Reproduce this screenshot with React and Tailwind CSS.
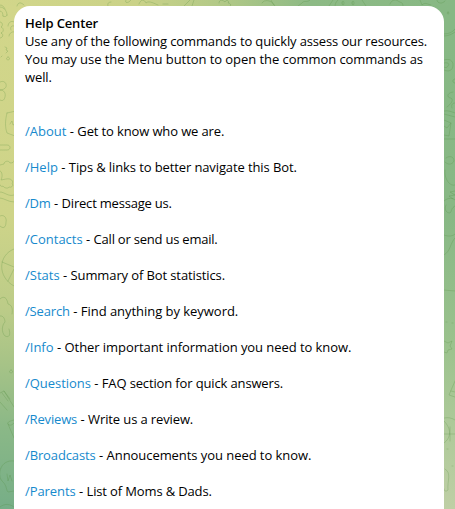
const INTRO = [
  { text: "Use any of the following commands to quickly assess our resources.", track: "tracking-[-0.135px]" },
  { text: "You may use the Menu button to open the common commands as", track: "tracking-[-0.06px]" },
  { text: "well.", track: "tracking-[-0.1px]" },
];

const COMMANDS = [
  ["/About", "Get to know who we are.", "tracking-normal", "tracking-[-0.13px]"],
  ["/Help", "Tips & links to better navigate this Bot.", "tracking-normal", "tracking-[-0.11px]"],
  ["/Dm", "Direct message us.", "tracking-[-0.2px]", "tracking-[-0.2px]"],
  ["/Contacts", "Call or send us email.", "tracking-normal", "tracking-[-0.22px]"],
  ["/Stats", "Summary of Bot statistics.", "tracking-normal", "tracking-[-0.11px]"],
  ["/Search", "Find anything by keyword.", "tracking-[-0.15px]", "tracking-[-0.04px]"],
  ["/Info", "Other important information you need to know.", "tracking-normal", "tracking-[-0.06px]"],
  ["/Questions", "FAQ section for quick answers.", "tracking-[-0.04px]", "tracking-[-0.14px]"],
  ["/Reviews", "Write us a review.", "tracking-[-0.16px]", "tracking-[-0.12px]"],
  ["/Broadcasts", "Annoucements you need to know.", "tracking-[-0.12px]", "tracking-[-0.06px]"],
  ["/Parents", "List of Moms & Dads.", "tracking-[-0.08px]", "tracking-[-0.14px]"],
];

function Wallpaper() {
  return (
    <svg className="absolute inset-0" width="455" height="509" viewBox="0 0 455 509">
      <defs>
        <linearGradient id="top" x1="0" y1="0" x2="1" y2="0">
          <stop offset="0" stopColor="#d2d68a" />
          <stop offset="0.3" stopColor="#cad288" />
          <stop offset="0.5" stopColor="#b0c887" />
          <stop offset="0.68" stopColor="#8dba85" />
          <stop offset="1" stopColor="#87b884" />
        </linearGradient>
        <linearGradient id="left" x1="0" y1="0" x2="0" y2="1">
          <stop offset="0" stopColor="#d2d68a" />
          <stop offset="0.42" stopColor="#ced489" />
          <stop offset="0.6" stopColor="#bccc88" />
          <stop offset="0.7" stopColor="#a9c487" />
          <stop offset="0.84" stopColor="#8ab887" />
          <stop offset="1" stopColor="#76ae87" />
        </linearGradient>
        <linearGradient id="right" x1="0" y1="0" x2="0" y2="1">
          <stop offset="0" stopColor="#87b884" />
          <stop offset="0.42" stopColor="#88b885" />
          <stop offset="0.67" stopColor="#9bc28d" />
          <stop offset="0.85" stopColor="#afca9a" />
          <stop offset="1" stopColor="#bfcfa5" />
        </linearGradient>
      </defs>
      <rect width="455" height="30" fill="url(#top)" />
      <rect y="6" width="30" height="503" fill="url(#left)" />
      <rect x="425" y="6" width="30" height="503" fill="url(#right)" />
      <g fill="none" stroke="#4e8a3c" strokeOpacity="0.24" strokeWidth="1" strokeLinecap="round" strokeLinejoin="round">
        <path d="M0 7c4 0 7 4 7 8M0 11c2 0 3 2 3 5M7 15c0 2-3 2-4 1M0 22c3 0 3 4 1 5c3 1 3 5 0 6c3 1 2 5-1 5M14 22c-3-2-6 1-6 4M14 26c-3-1-4 2-3 4M9 36c0-3 4-5 5-4M5 47l2 1-1 2 2 1-2 2M1 57l1-1M8 57a1.5 1.5 0 1 0 .1 0" />
        <path d="M0 82c4-2 7 1 6 5c-1 2-4 3-6 3c4 0 6 3 5 7c-1 4-3 4-5 3M7 113l9-2M7 113c-2 8-2 14 0 20l8 3M10 124l2-3 1 4 3-1M0 145h7c4 0 4 5 0 5h-7M0 165l4-1c0-3 5-4 6-1c3 0 4-1 4-2" />
        <path d="M0 171c2 0 3 5 1 9l5-1c5-1 8 2 6 5c2 1 0 4-3 3c-1 2-5 1-6-1c-1 1-3 0-3-1M0 192c5 0 8 5 14 3M0 198c4 0 8 4 14 4M0 216c4-2 7 2 6 6c0 6-3 7-6 4M14 249c-16 6-17 28 0 37M2 262l12 5M8 281l6-12" />
        <path d="M0 299c4-4 7-1 8 5c4 1 5 5 4 10M0 316c3-1 5 3 5 6c-3 3-4 10 0 14c4 2 6-1 4-7M11 370a1.5 1.5 0 1 0 .1 0M0 393l4-2 10 16M0 402l7 8M2 393l6 8M4 391l6 8M14 420c-4 1-7 2-6 4l6 14M8 424c2 3 5 0 6-1M14 461c-14-2-18 15-11 21c4 4 3 8 5 10l6-1M7 474l1 7 2-6 2 6M0 507c5-4 10-3 14 0" />
        <path d="M0 5c3 0 4 2 5 4M17 6c1-4 4-4 7-1M108 6c-1-3 1-4 3-4M126 0c-2 4 3 3 5 0M139 4c2-5 5-5 7-1c3-3 9 1 12 2M163 4h5M184 6l6-6M194 0l-2 6M219 3c0-4 4-3 6-1c1-3 5-1 3 1c2 0 4 2 2 3M262 3c2-4 10-3 12 2M271 0c1 3 3 4 4 6M298 6l4-3c2-3 5 0 8-3M329 6l4-6M335 6c0-3 2-5 3-6M342 3a1 2 0 1 1 2 0a1 2 0 1 1-2 0M352 3a1 2 0 1 1 2 0a1 2 0 1 1-2 0M362 0l4 6M390 4c1-4 6-5 8-3c3 2 5 1 5 5M420 0l2 5c3-3 5-1 9 0M437 0c0 4 6 4 8 1" />
        <path d="M455 29c-2 3-6 5-11 5M455 32c-3 2-6 4-11 4M448 12a1 1 0 1 0 .1 0M444 60c6-2 9 1 9 5c0 6-5 7-9 5M444 63c4-1 6 1 4 3c-1 2-3 2-4 1M455 79c-3 0-3 4 0 4M453 92c-7 1-6 6-2 6c3 2 0 6-4 9M455 103c-3 0-4 2-3 5M444 111c4-1 8 1 11 2M444 114l11 3M444 120l7 3-4 5-3-2M451 123l-2 13-5-1M444 139l11 0M446 158c4-3 8-1 8 3c-2 4-6 4-9 1" />
        <path d="M445 170c-1 9 5 17 10 15M455 191l-5 1 5 3-6 1 4 3M444 201c4-4 10-3 11-1M446 205c-2 4 0 8 4 8c2-2 1-5 5-7M444 235c5 2 9 1 11-1M455 238c-5 5-4 13-11 17M444 290c4 0 7 1 11 1M446 322h1M452 323h1M444 341l4 2 4-2-2 5 2 3-4 1-1 3-3-1M455 381l-6 14 6 2M451 391l4 1M444 418c4-1 8 0 11 2M444 421c8 8 7 17 0 22M444 434h11M450 427v14M447 449h1M452 466h1M445 469c7 4 2 12 3 21c-2 2-4 1-4-1" />
      </g>
    </svg>
  );
}

export default function App() {
  return (
    <div className="relative h-[509px] w-[455px] overflow-hidden bg-[#a9c487] pl-3.5 pt-1.5 font-['Open_Sans','Noto_Sans',sans-serif] text-[13px] leading-[18px] text-black">
      <Wallpaper />
      <main className="relative h-[520px] w-[430px] rounded-t-[16px] bg-white pl-[11px] pt-2">
        <h1 className="font-semibold tracking-[-0.14px]">Help Center</h1>
        {INTRO.map(({ text, track }) => (
          <p key={text} className={`whitespace-nowrap ${track}`}>{text}</p>
        ))}
        <ul className="mt-9 flex flex-col gap-[18px]">
          {COMMANDS.map(([name, description, nameTrack, textTrack]) => (
            <li key={name} className="whitespace-nowrap">
              <a className={`text-[#168acd] ${nameTrack}`}>{name}</a> - <span className={textTrack}>{description}</span>
            </li>
          ))}
        </ul>
      </main>
    </div>
  );
}
